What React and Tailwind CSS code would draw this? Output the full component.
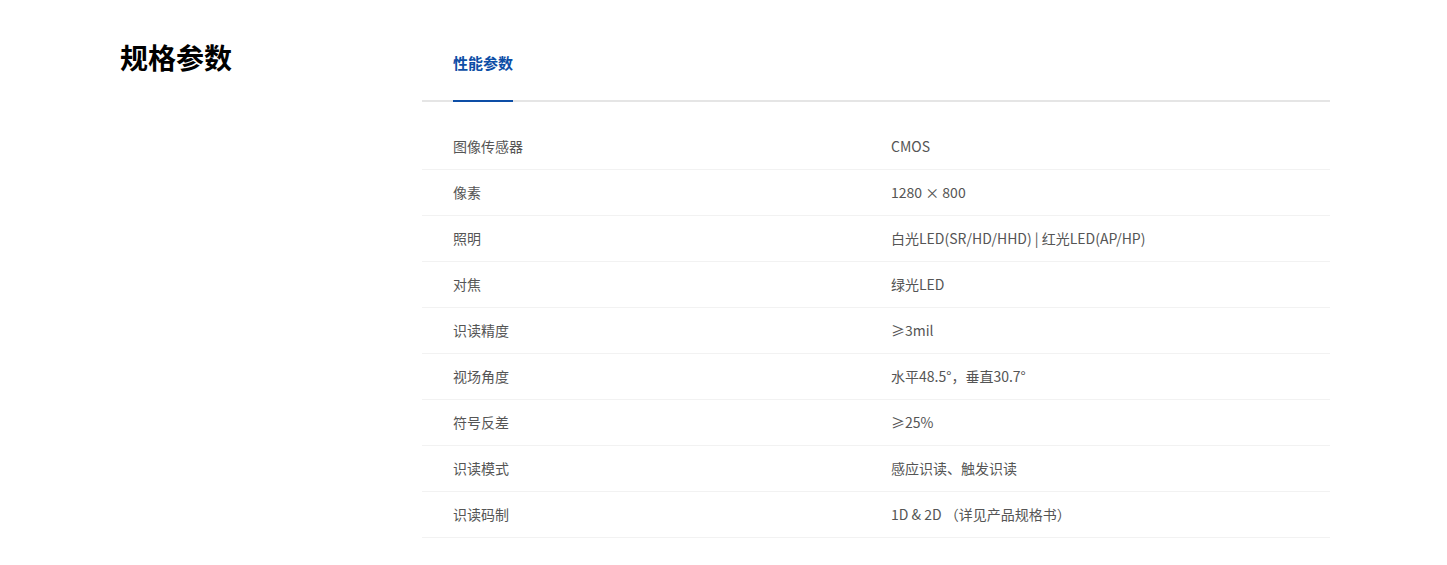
const ROWS = [
  ['图像传感器', 'CMOS'],
  ['像素', '1280 × 800'],
  ['照明', '白光LED(SR/HD/HHD) | 红光LED(AP/HP)'],
  ['对焦', '绿光LED'],
  ['识读精度', '≥3mil'],
  ['视场角度', '水平48.5°，垂直30.7°'],
  ['符号反差', '≥25%'],
  ['识读模式', '感应识读、触发识读'],
  ['识读码制', '1D & 2D （详见产品规格书）'],
];

export default function App() {
  return (
    <div className="bg-white h-[565px] flex pl-[120px] pt-[38px]" style={{ fontFamily: '"Noto Sans CJK SC", "Liberation Sans", sans-serif' }}>
      <h2 className="w-[302px] text-[28px] font-bold text-black leading-[38px]">规格参数</h2>
      <div className="w-[908px]">
        <div className="flex border-b-2 border-[#e5e5e5] pl-[31px]">
          <div className="text-[15px] font-bold text-[#0d4ea6] pt-[12px] pb-[24px] border-b-2 border-[#0d4ea6] -mb-[2px] leading-[26px]">性能参数</div>
        </div>
        <div className="mt-[22px]">
          {ROWS.map(([k, v]) => (
            <div key={k} className="flex h-[46px] items-center border-b border-[#f2f2f2] pl-[31px] text-[14px] text-[#555]">
              <div className="w-[438px]">{k}</div>
              <div>{v}</div>
            </div>
          ))}
        </div>
      </div>
    </div>
  );
}
